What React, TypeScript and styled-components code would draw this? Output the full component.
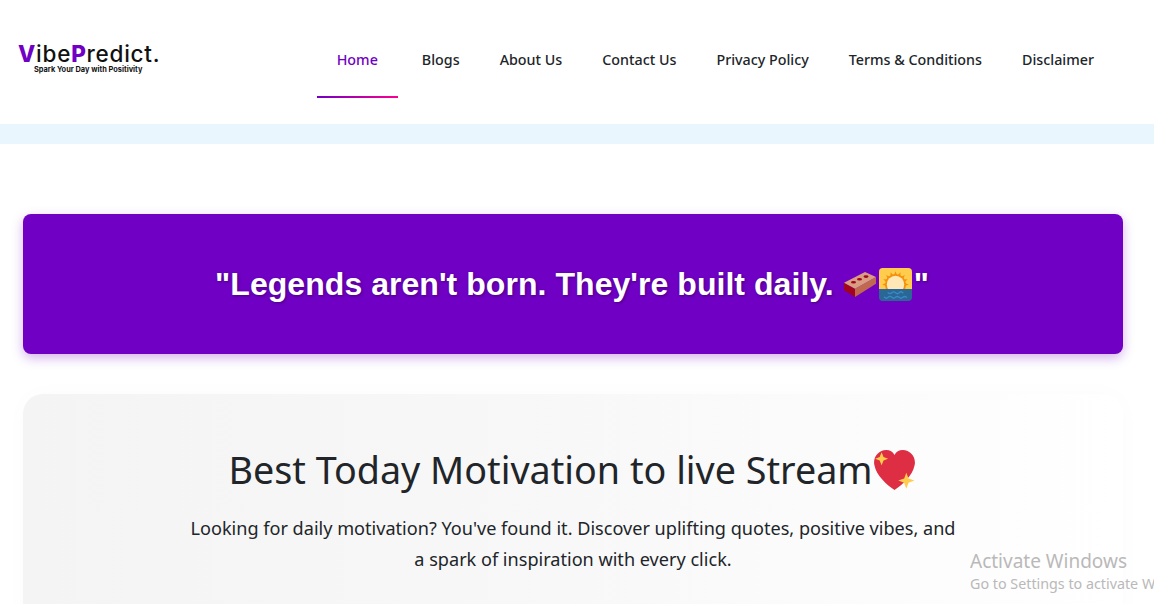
import React from 'react';
import styled, { createGlobalStyle } from 'styled-components';

const GlobalStyle = createGlobalStyle`
  html, body {
    margin: 0;
    padding: 0;
    height: 604px;
    overflow: hidden;
    background: #fff;
    font-family: 'Noto Sans', 'Open Sans', sans-serif;
  }
`;

const Page = styled.div`
  position: relative;
  height: 604px;
  overflow: hidden;
`;

const Header = styled.header`
  height: 124px;
  display: flex;
  align-items: flex-start;
  justify-content: space-between;
  padding: 0 40px 0 18px;
  box-sizing: border-box;
`;

const Logo = styled.div`
  margin-top: 42px;
  width: 142px;
  color: #111;
`;

const LogoName = styled.div`
  font-family: Inter, 'Liberation Sans', sans-serif;
  font-size: 22.500px;
  line-height: 23px;
  letter-spacing: 0.75px;
  font-weight: 500;
  white-space: nowrap;
`;

const LogoMark = styled.span`
  color: #6f00c4;
  font-weight: 800;
`;

const Tagline = styled.div`
  font-family: Inter, 'Liberation Sans', sans-serif;
  font-size: 7.400px;
  line-height: 9px;
  font-weight: 700;
  margin-left: 16px;
  white-space: nowrap;
`;

const Nav = styled.nav`
  display: flex;
  margin-top: 21px;
`;

const NavLink = styled.a<{ $active?: boolean }>`
  height: 77px;
  box-sizing: border-box;
  padding: 28px 20px 0;
  margin-right: ${(p) => (p.$active ? '4px' : '0')};
  font-size: 14.3px;
  line-height: 22px;
  font-weight: 500;
  white-space: nowrap;
  color: ${(p) => (p.$active ? '#6f00c4' : '#212529')};
  border-bottom: 2px solid transparent;
  border-image: ${(p) => (p.$active ? 'linear-gradient(90deg, #6f00c4, #ff0090) 1' : 'none')};
`;

const Band = styled.div`
  height: 20px;
  background: #e9f6fd;
`;

const Main = styled.main`
  padding: 70px 31px 0 23px;
`;

const QuoteBanner = styled.div`
  height: 140px;
  box-sizing: border-box;
  padding-right: 2px;
  border-radius: 8px;
  background: #6f00c4;
  box-shadow: 0 4px 12px rgba(111, 0, 196, 0.3);
  display: flex;
  align-items: center;
  justify-content: center;
  color: #fff;
  font-family: 'Liberation Sans', Arial, sans-serif;
  font-size: 32px;
  letter-spacing: 0.05px;
  font-weight: 700;
  text-shadow: 1px 1px 3px rgba(0, 0, 0, 0.35);
  white-space: pre;
`;

const BrickIcon = styled.svg`
  width: 32px;
  height: 25px;
  flex: none;
  margin: 0 3px 0 1px;
`;

const SunriseIcon = styled.svg`
  width: 33px;
  height: 33px;
  flex: none;
  margin-right: 2px;
`;

const HeartIcon = styled.svg`
  width: 43px;
  height: 42px;
  flex: none;
`;

const IntroCard = styled.section`
  margin-top: 40px;
  height: 300px;
  border-radius: 20px;
  background: linear-gradient(90deg, #f4f4f4 0%, #f8f8f8 50%, #ffffff 100%);
  box-shadow: 0 0 24px rgba(0, 0, 0, 0.02);
  text-align: center;
  padding: 48px 0 0;
`;

const Title = styled.h1`
  margin: 0;
  padding-right: 2px;
  display: flex;
  justify-content: center;
  align-items: center;
  font-size: 37.7px;
  line-height: 56px;
  font-weight: 400;
  color: #212529;
`;

const Lead = styled.p`
  margin: 15px auto 0;
  width: 775px;
  font-size: 18.1px;
  line-height: 31px;
  color: #212529;
`;

const Watermark = styled.div`
  position: absolute;
  left: 970px;
  top: 549px;
  width: 184px;
  overflow: hidden;
  white-space: nowrap;
  color: #b9b9b9;
`;

const WatermarkTitle = styled.div`
  font-size: 19px;
  line-height: 24px;
`;

const WatermarkText = styled.div`
  font-size: 14.3px;
  line-height: 21px;
`;

const Brick = () => (
  <BrickIcon viewBox="0 0 32 25">
    <path fill="#a0041e" d="M0 10.700l11 6v8.300L0 18.300z" />
    <path fill="#c1694f" d="M11 16.700L32 5v6.700L11 25z" />
    <path fill="#d99e82" d="M0 10.700L21 0l11 5-21 11.700z" />
    <ellipse cx="9.500" cy="10.200" rx="2.500" ry="1.300" fill="#a0041e" />
    <ellipse cx="15.500" cy="7.300" rx="2.500" ry="1.300" fill="#a0041e" />
    <ellipse cx="22" cy="4.600" rx="2.500" ry="1.300" fill="#a0041e" />
  </BrickIcon>
);

const rayAngles = [-180, -157, -135, -112, -90, -68, -45, -23, 0];

const Sunrise = () => (
  <SunriseIcon viewBox="0 0 36 36">
    <path fill="#ffcc4d" d="M36 23V4a4 4 0 0 0-4-4H4a4 4 0 0 0-4 4v19z" />
    {rayAngles.map((a) => (
      <path key={a} fill="#f4900c" d="M16.300 8L18 3.500 19.700 8z" transform={`rotate(${a + 90} 18 18)`} />
    ))}
    <circle cx="18" cy="18" r="11.500" fill="#f4900c" />
    <circle cx="18" cy="18" r="9.500" fill="#ffe8b6" />
    <path fill="#2a6797" d="M0 23v9a4 4 0 0 0 4 4h28a4 4 0 0 0 4-4v-9z" />
    <g fill="none" stroke="#3b88c3" strokeWidth="1.500" strokeLinecap="round">
      <path d="M10 27q2 2 4 0t4 0 4 0 4 0" />
      <path d="M6 32q2 2 4 0t4 0 4 0 4 0 4 0 4 0" />
    </g>
  </SunriseIcon>
);

const SparkleHeart = () => (
  <HeartIcon viewBox="0 0 40 39">
    <path
      fill="#dd2e44"
      d="M39 12.500C39 6.200 34 1 27.700 1 24.200 1 21.500 2.800 20 5.500 18.500 2.800 15.800 1 12.300 1 6 1 1 6.200 1 12.500c0 1 .1 2 .4 2.800C3 24.500 13.500 34 20 38c6.500-4 17-13.500 18.600-22.700.3-.8.400-1.800.400-2.800z"
    />
    <path fill="#ffcc4d" d="M8 3l1.800 4.400L14 9l-4.200 1.600L8 15l-1.800-4.400L2 9l4.200-1.600z" />
    <path fill="#ffcc4d" d="M31 22l2 5.300 5.500 2-5.500 2L31 37l-2-5.700-5.500-2 5.500-2z" />
  </HeartIcon>
);

const links = ['Blogs', 'About Us', 'Contact Us', 'Privacy Policy', 'Terms & Conditions', 'Disclaimer'];

export default function App() {
  return (
    <Page>
      <GlobalStyle />
      <Header>
        <Logo>
          <LogoName>
            <LogoMark>V</LogoMark>ibe<LogoMark>P</LogoMark>redict.
          </LogoName>
          <Tagline>Spark Your Day with Positivity</Tagline>
        </Logo>
        <Nav>
          <NavLink $active>Home</NavLink>
          {links.map((l) => (
            <NavLink key={l}>{l}</NavLink>
          ))}
        </Nav>
      </Header>
      <Band />
      <Main>
        <QuoteBanner>
          "Legends aren't born. They're built daily. <Brick />
          <Sunrise />"
        </QuoteBanner>
        <IntroCard>
          <Title>
            Best Today Motivation to live Stream
            <SparkleHeart />
          </Title>
          <Lead>
            Looking for daily motivation? You've found it. Discover uplifting quotes, positive vibes, and a spark of
            inspiration with every click.
          </Lead>
        </IntroCard>
      </Main>
      <Watermark>
        <WatermarkTitle>Activate Windows</WatermarkTitle>
        <WatermarkText>Go to Settings to activate Windows.</WatermarkText>
      </Watermark>
    </Page>
  );
}
